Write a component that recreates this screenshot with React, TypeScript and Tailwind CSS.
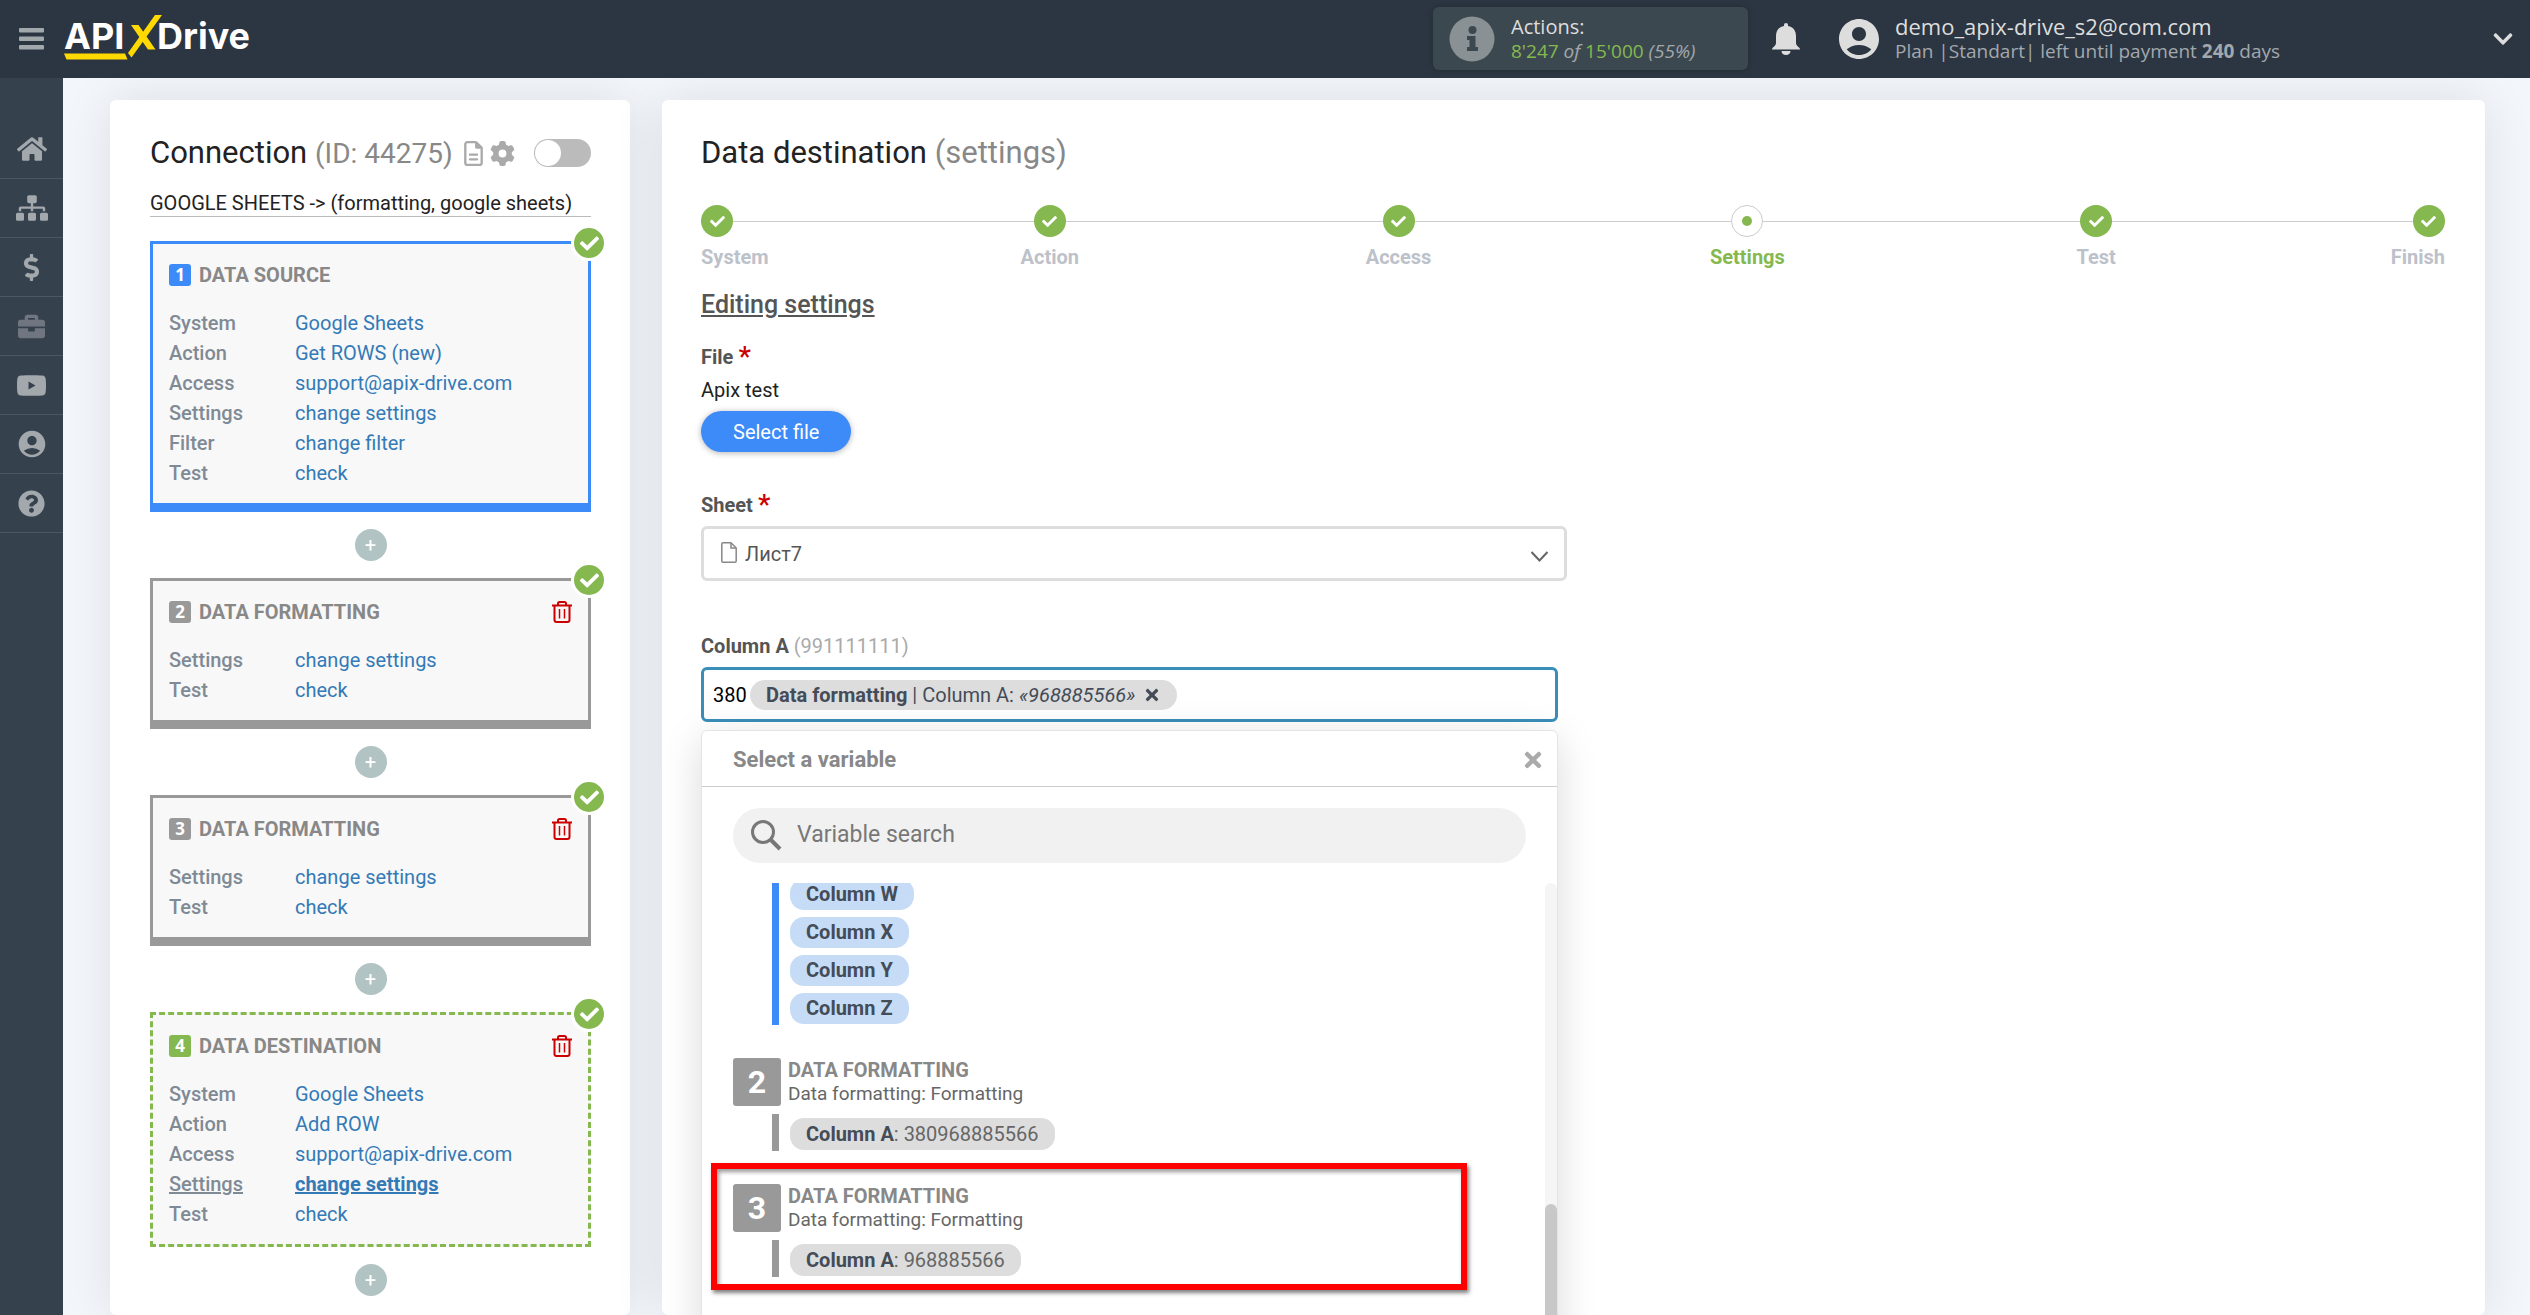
import type { ReactNode } from "react";
import {
  FaBriefcase,
  FaCheck,
  FaChevronDown,
  FaDollarSign,
  FaHome,
  FaQuestionCircle,
  FaSitemap,
  FaTimes,
} from "react-icons/fa";
import { FaGear, FaRegFileLines } from "react-icons/fa6";
import { MdAccountCircle } from "react-icons/md";

type Tone = "blue" | "gray" | "green";

type Block = {
  id: number;
  title: string;
  tone: Tone;
  rows: { label: string; value: string; current?: boolean }[];
};

const blocks: Block[] = [
  {
    id: 1,
    title: "DATA SOURCE",
    tone: "blue",
    rows: [
      { label: "System", value: "Google Sheets" },
      { label: "Action", value: "Get ROWS (new)" },
      { label: "Access", value: "support@apix-drive.com" },
      { label: "Settings", value: "change settings" },
      { label: "Filter", value: "change filter" },
      { label: "Test", value: "check" },
    ],
  },
  {
    id: 2,
    title: "DATA FORMATTING",
    tone: "gray",
    rows: [
      { label: "Settings", value: "change settings" },
      { label: "Test", value: "check" },
    ],
  },
  {
    id: 3,
    title: "DATA FORMATTING",
    tone: "gray",
    rows: [
      { label: "Settings", value: "change settings" },
      { label: "Test", value: "check" },
    ],
  },
  {
    id: 4,
    title: "DATA DESTINATION",
    tone: "green",
    rows: [
      { label: "System", value: "Google Sheets" },
      { label: "Action", value: "Add ROW" },
      { label: "Access", value: "support@apix-drive.com" },
      { label: "Settings", value: "change settings", current: true },
      { label: "Test", value: "check" },
    ],
  },
];

const blockTone: Record<Tone, string> = {
  blue: "border-[3px] border-b-[9px] border-[#3d8bf8]",
  gray: "border-[3px] border-b-[9px] border-[#999999]",
  green: "border-[3px] border-dashed border-[#85b94f]",
};

const badgeTone: Record<Tone, string> = {
  blue: "bg-[#3d8bf8]",
  gray: "bg-[#999999]",
  green: "bg-[#85b94f]",
};

const steps = ["System", "Action", "Access", "Settings", "Test", "Finish"];
const currentStep = "Settings";

function Logo() {
  return (
    <svg width="196" height="50" viewBox="0 0 196 50" role="img" aria-label="APIXDrive">
      <g fill="#fff" className="font-[Inter,sans-serif] text-[36px] font-bold">
        <text x="0" y="35">API</text>
        <text x="93" y="35">Drive</text>
      </g>
      <g fill="#ffd900">
        <path d="M0 39.500h61l2.500 6H2.500z" />
        <path d="M91 1h7L67.500 43.500 64 39z" />
        <path d="M67 11h7.500l17 24.500H84z" />
      </g>
    </svg>
  );
}

function YoutubeIcon() {
  return (
    <svg width="29" height="21" viewBox="0 0 29 21" aria-hidden="true">
      <path
        fill="currentColor"
        fillRule="evenodd"
        d="M4 .5C9 0 20 0 25 .5c2.500.2 3.500 1.500 3.700 3.500.4 4 .4 9 0 13-.2 2-1.200 3.300-3.700 3.500-5 .4-16 .4-21 0C1.500 20.300.5 19 .3 17c-.4-4-.4-9 0-13C.5 2 1.500.7 4 .5zM11.500 6.500v8l7-4z"
      />
    </svg>
  );
}

function TrashIcon() {
  return (
    <svg width="20" height="22" viewBox="0 0 20 22" fill="none" stroke="#cc0000" strokeWidth="2" aria-hidden="true">
      <path d="M0 4.500h20M6 4V2.500Q6 1 7.500 1h5Q14 1 14 2.500V4M2.500 4.500V19q0 2 2 2h11q2 0 2-2V4.500" />
      <path d="M7.500 8v9.500M12.500 8v9.500" strokeWidth="1.500" />
    </svg>
  );
}

function SheetIcon() {
  return (
    <svg width="16" height="21" viewBox="0 0 16 21" fill="none" stroke="#888" strokeWidth="1.500" aria-hidden="true">
      <path d="M2 .8h8l5.200 5.200v13q0 1.200-1.200 1.200H2Q.8 20.200.8 19V2Q.8.8 2 .8z" strokeLinejoin="round" />
      <path d="M10 1v5h5" />
    </svg>
  );
}

const navItems: { label: string; icon: ReactNode; dim?: boolean }[] = [
  { label: "Home", icon: <FaHome size={30} /> },
  { label: "Connections", icon: <FaSitemap size={32} /> },
  { label: "Billing", icon: <FaDollarSign size={27} /> },
  { label: "Business", icon: <FaBriefcase size={27} />, dim: true },
  { label: "Video", icon: <YoutubeIcon /> },
  { label: "Profile", icon: <MdAccountCircle size={32} /> },
  { label: "Help", icon: <FaQuestionCircle size={27} /> },
];

function Header() {
  return (
    <header className="flex h-[78px] shrink-0 items-center justify-between bg-[#2b3642] pl-[19px] pr-4 font-['Open_Sans',sans-serif]">
      <div className="flex items-center gap-5">
        <button type="button" aria-label="Menu" className="text-[#a3a8ad]">
          <svg width="25" height="22" viewBox="0 0 25 22" fill="currentColor" aria-hidden="true">
            <rect width="25" height="4.500" rx="1" />
            <rect y="8.500" width="25" height="4.500" rx="1" />
            <rect y="17" width="25" height="4.500" rx="1" />
          </svg>
        </button>
        <a href="#home">
          <Logo />
        </a>
      </div>

      <div className="flex items-center pb-px">
        <div className="flex h-[63px] w-[315px] items-center gap-4 rounded-md bg-[#3c4850] px-4 shadow-[0_0_6px_rgba(0,0,0,0.2)]">
          <svg width="46" height="46" viewBox="0 0 46 46" className="shrink-0" aria-hidden="true">
            <circle cx="23" cy="23" r="22.500" fill="#8a9194" />
            <circle cx="23.500" cy="14" r="4" fill="#3c4850" />
            <path d="M18 20h8.500v11H29v4H18v-4h2.500v-7H18z" fill="#3c4850" />
          </svg>
          <div>
            <p className="text-[20px] leading-[25px] text-[#dddddd]">Actions:</p>
            <p className="text-[19px] leading-[25px] text-[#85b94f]">
              8&apos;247 <i className="text-[#a3a8ad]">of</i> 15&apos;000{" "}
              <i className="text-[#a3a8ad]">(55%)</i>
            </p>
          </div>
        </div>

        <button type="button" aria-label="Notifications" className="ml-6 text-[#dddddd]">
          <svg width="28" height="32" viewBox="0 0 28 32" fill="currentColor" aria-hidden="true">
            <path d="M14 0c1.200 0 2 .9 2 2v1c5.500 1 8 5 8 10v7c0 2 1.500 3 3 4.500 1 1 1 1.500 1 2H0c0-.5 0-1 1-2C2.500 23 4 22 4 20v-7C4 8 6.500 4 12 3V2c0-1.100.8-2 2-2zM9.500 28h9c0 2.500-2 4-4.500 4s-4.500-1.500-4.500-4z" />
          </svg>
        </button>

        <div className="ml-[35px] flex w-[679px] items-center">
          <MdAccountCircle size={48} className="shrink-0 text-[#dddddd]" />
          <div className="ml-3 flex-1">
            <p className="text-[22px] leading-[25px] text-[#dddddd]">demo_apix-drive_s2@com.com</p>
            <p className="text-[19px] leading-6 text-[#a3a8ad]">
              Plan |Standart| left until payment <b>240</b> days
            </p>
          </div>
          <button type="button" aria-label="Account menu" className="text-[#dddddd]">
            <FaChevronDown size={22} />
          </button>
        </div>
      </div>
    </header>
  );
}

function Sidebar() {
  return (
    <nav className="w-[63px] shrink-0 bg-[#36414e] pt-[42px]">
      {navItems.map((item) => (
        <a
          key={item.label}
          href={`#${item.label.toLowerCase()}`}
          aria-label={item.label}
          className={`flex h-[59px] items-center justify-center border-b border-[#4d5762] ${
            item.dim ? "text-[#6f7680]" : "text-[#a3a8ad]"
          }`}
        >
          {item.icon}
        </a>
      ))}
    </nav>
  );
}

function ConnectionBlock({ block }: { block: Block }) {
  return (
    <section className={`relative bg-[#f8f8f8] px-4 pb-[14px] pt-4 ${blockTone[block.tone]}`}>
      <span className="absolute -right-[19px] -top-[19px] flex size-[36px] items-center justify-center rounded-full border-[3px] border-white bg-[#85b94f] text-white">
        <FaCheck size={19} />
      </span>
      <div className="mb-[18px] flex h-[30px] items-center">
        <span
          className={`flex size-[22px] items-center justify-center rounded-[3px] font-['Noto_Sans',sans-serif] text-[17px] font-bold text-white ${badgeTone[block.tone]}`}
        >
          {block.id}
        </span>
        <h2 className="ml-2 flex-1 text-[20px] font-bold text-[#888888]">{block.title}</h2>
        {block.id > 1 && (
          <button type="button" aria-label={`Delete block ${block.id}`}>
            <TrashIcon />
          </button>
        )}
      </div>
      <dl className="pb-px text-[20px] leading-[30px]">
        {block.rows.map((row) => (
          <div key={row.label} className="flex">
            <dt className={`w-[126px] font-medium text-[#808a95] ${row.current ? "underline" : ""}`}>
              {row.label}
            </dt>
            <dd>
              <a href="#edit" className={`text-[#337ab7] ${row.current ? "font-bold underline" : ""}`}>
                {row.value}
              </a>
            </dd>
          </div>
        ))}
      </dl>
    </section>
  );
}

function ConnectionPanel() {
  return (
    <aside className="w-[520px] shrink-0 rounded-md bg-white px-[39px] pl-10 pt-[33px] shadow-[0_0_50px_rgba(0,0,0,0.1)]">
      <div className="flex h-10 items-center">
        <h1 className="whitespace-nowrap text-[31px] text-[#222222]">
          Connection <span className="text-[28px] text-[#888888]">(ID: 44275)</span>
        </h1>
        <a href="#log" aria-label="Log" className="ml-2 text-[#aaaaaa]">
          <FaRegFileLines size={25} />
        </a>
        <a href="#options" aria-label="Options" className="ml-1 text-[#aaaaaa]">
          <FaGear size={25} />
        </a>
        <label className="ml-auto flex h-7 w-[57px] cursor-pointer items-center rounded-full bg-[#bbbbbb] px-px has-checked:justify-end">
          <input type="checkbox" aria-label="Enable connection" className="peer sr-only" />
          <span className="size-[26px] rounded-full bg-white" />
        </label>
      </div>
      <p className="mt-[17px] whitespace-nowrap border-b border-[#bbbbbb] text-[20px] leading-[26px] text-[#222222]">
        GOOGLE SHEETS -&gt; (formatting, google sheets)
      </p>

      <div className="mt-6">
        {blocks.map((block) => (
          <div key={block.id}>
            <ConnectionBlock block={block} />
            <div className="flex justify-center py-[17px]">
              <button
                type="button"
                aria-label="Add block"
                className="flex size-8 items-center justify-center rounded-full bg-[#b2c3c3] text-[20px] text-white"
              >
                +
              </button>
            </div>
          </div>
        ))}
      </div>
    </aside>
  );
}

function Stepper() {
  return (
    <ol className="mt-8 flex">
      {steps.map((step, i) => {
        const first = i === 0;
        const last = i === steps.length - 1;
        const current = step === currentStep;
        return (
          <li
            key={step}
            className={`flex flex-col ${
              first ? "w-1/10 items-start" : last ? "w-1/10 items-end" : "w-1/5 items-center"
            }`}
          >
            <div className="flex w-full items-center">
              {!first && <span className="h-px flex-1 bg-[#cccccc]" />}
              {current ? (
                <span className="flex size-8 items-center justify-center rounded-full border border-[#cccccc] bg-white">
                  <span className="size-[10px] rounded-full bg-[#85b94f]" />
                </span>
              ) : (
                <span className="flex size-8 items-center justify-center rounded-full bg-[#85b94f] text-white">
                  <FaCheck size={15} />
                </span>
              )}
              {!last && <span className="h-px flex-1 bg-[#cccccc]" />}
            </div>
            <span
              className={`mt-2 text-[20px] font-bold leading-6 ${current ? "text-[#85b94f]" : "text-[#bcc1ca]"}`}
            >
              {step}
            </span>
          </li>
        );
      })}
    </ol>
  );
}

function VariableGroup({ id, value, highlighted }: { id: number; value: string; highlighted?: boolean }) {
  return (
    <div className="relative mt-8">
      <div className="flex gap-[7px] pt-px">
        <span className="flex size-12 items-center justify-center rounded-[3px] bg-[#999999] text-[32px] font-bold text-white">
          {id}
        </span>
        <div className="leading-6">
          <p className="text-[20px] font-bold text-[#888888]">DATA FORMATTING</p>
          <p className="text-[19px] text-[#666666]">Data formatting: Formatting</p>
        </div>
      </div>
      <div className="ml-[39px] mt-2 border-l-[7px] border-[#999999] pb-px pl-[11px] pt-1">
        <button
          type="button"
          className="block h-8 rounded-[14px] bg-[#dddddd] px-4 text-[20px] leading-8 text-[#666666]"
        >
          <b className="text-[#444c58]">Column A</b>: {value}
        </button>
      </div>
      {highlighted && (
        <div className="pointer-events-none absolute -bottom-[13px] -left-[22px] -top-5 w-[756px] border-[6px] border-[#ff0000] shadow-[2px_3px_4px_rgba(0,0,0,0.5),inset_2px_3px_4px_rgba(0,0,0,0.4)]" />
      )}
    </div>
  );
}

function VariablePicker() {
  return (
    <div className="mt-2 rounded-md border border-[#e4e4e4] bg-white shadow-[0_10px_40px_rgba(0,0,0,0.15)]">
      <div className="flex h-14 items-center justify-between border-b border-[#cccccc] pl-[31px] pr-3 pt-[2px]">
        <h3 className="text-[22px] font-bold text-[#888888]">Select a variable</h3>
        <button type="button" aria-label="Close" className="text-[#aaaaaa]">
          <FaTimes size={24} />
        </button>
      </div>

      <label className="mx-[31px] mt-[21px] flex h-[55px] items-center rounded-full bg-[#f1f1f1] pl-[17px] pr-6">
        <svg width="32" height="32" viewBox="0 0 32 32" fill="none" stroke="#777777" aria-hidden="true">
          <circle cx="13" cy="12" r="10.500" strokeWidth="3" />
          <path d="M20 19l10 10" strokeWidth="4" />
        </svg>
        <input
          type="search"
          aria-label="Variable search"
          placeholder="Variable search"
          className="ml-[15px] min-w-0 flex-1 bg-transparent text-[23px] outline-none placeholder:text-[#777777]"
        />
      </label>

      <div className="mt-5 flex overflow-hidden">
        <div className="-mt-1 flex-1 pb-40 pl-[31px]">
          <div className="ml-[39px] flex flex-col items-start gap-[7px] border-l-[7px] border-[#3d8bf8] pb-px pl-[11px]">
            {["Column W", "Column X", "Column Y", "Column Z"].map((name) => (
              <button
                key={name}
                type="button"
                className="h-[31px] rounded-[14px] bg-[#c6dcf6] px-4 text-[20px] font-bold leading-[31px] text-[#444c58]"
              >
                {name}
              </button>
            ))}
          </div>
          <VariableGroup id={2} value="380968885566" />
          <VariableGroup id={3} value="968885566" highlighted />
        </div>
        <div className="flex w-3 flex-col justify-end rounded-full bg-[#f5f5f5]">
          <div className="h-[42%] rounded-full bg-[#c8c8c8]" />
        </div>
      </div>
    </div>
  );
}

function Required() {
  return <span className="text-[28px] font-medium leading-none text-[#cc0000]">*</span>;
}

function SettingsPanel() {
  return (
    <main className="min-w-0 flex-1 rounded-md bg-white px-10 pl-[39px] pt-[33px] shadow-[0_0_50px_rgba(0,0,0,0.1)]">
      <h1 className="h-10 text-[31px] leading-10 text-[#222222]">
        Data destination <span className="text-[#888888]">(settings)</span>
      </h1>

      <Stepper />

      <h2 className="mt-5 text-[25px] font-medium leading-8 text-[#555555] underline">Editing settings</h2>

      <div className="w-1/2 max-w-[866px] text-[20px]">
        <h3 className="mt-[21px] flex h-[30px] items-center gap-[5px] font-bold text-[#555555]">
          File <Required />
        </h3>
        <p className="mt-[3px] leading-[30px] text-[#222222]">Apix test</p>
        <button
          type="button"
          className="mt-[6px] h-[41px] rounded-full bg-[#3d8bf8] px-8 text-white shadow-[0_1px_6px_rgba(0,0,0,0.3)]"
        >
          Select file
        </button>

        <label htmlFor="sheet" className="mt-[38px] flex h-[30px] items-center gap-[5px] font-bold text-[#555555]">
          Sheet <Required />
        </label>
        <div className="relative mt-[6px]">
          <select
            id="sheet"
            className="h-[55px] w-full appearance-none rounded-md border-[3px] border-[#dddddd] bg-white pl-[41px] text-[20px] text-[#555555]"
          >
            <option>Лист7</option>
          </select>
          <span className="pointer-events-none absolute left-5 top-4">
            <SheetIcon />
          </span>
          <svg
            width="19"
            height="12"
            viewBox="0 0 19 12"
            fill="none"
            stroke="#666666"
            strokeWidth="2"
            className="pointer-events-none absolute right-[18px] top-6"
            aria-hidden="true"
          >
            <path d="M1.500 2l8 8.500 8-8.500" />
          </svg>
        </div>

        <div className="mr-[9px]">
          <label htmlFor="column-a" className="mt-[50px] block leading-[30px] text-[#aaaaaa]">
            <b className="text-[#555555]">Column A</b> (991111111)
          </label>
          <div className="mt-[6px] flex h-[55px] items-center rounded-md border-[3px] border-[#3a8eb8] pl-[9px]">
            <input id="column-a" type="text" defaultValue="380" className="w-[37px] text-black outline-none" />
            <span className="flex h-[30px] items-center rounded-full bg-[#dddddd] px-4 text-[#444c58]">
              <span className="whitespace-nowrap">
                <b>Data formatting</b> | Column A: <i>«968885566»</i>
              </span>
              <button type="button" aria-label="Remove variable" className="ml-2">
                <FaTimes size={18} />
              </button>
            </span>
          </div>
          <VariablePicker />
        </div>
      </div>
    </main>
  );
}

export default function App() {
  return (
    <div className="flex h-screen flex-col overflow-hidden bg-[#f3f6fb] font-[Roboto,sans-serif]">
      <Header />
      <div className="flex min-h-0 flex-1">
        <Sidebar />
        <div className="flex min-w-0 flex-1 gap-8 overflow-hidden pl-[47px] pr-[45px] pt-[22px]">
          <ConnectionPanel />
          <SettingsPanel />
        </div>
      </div>
    </div>
  );
}
